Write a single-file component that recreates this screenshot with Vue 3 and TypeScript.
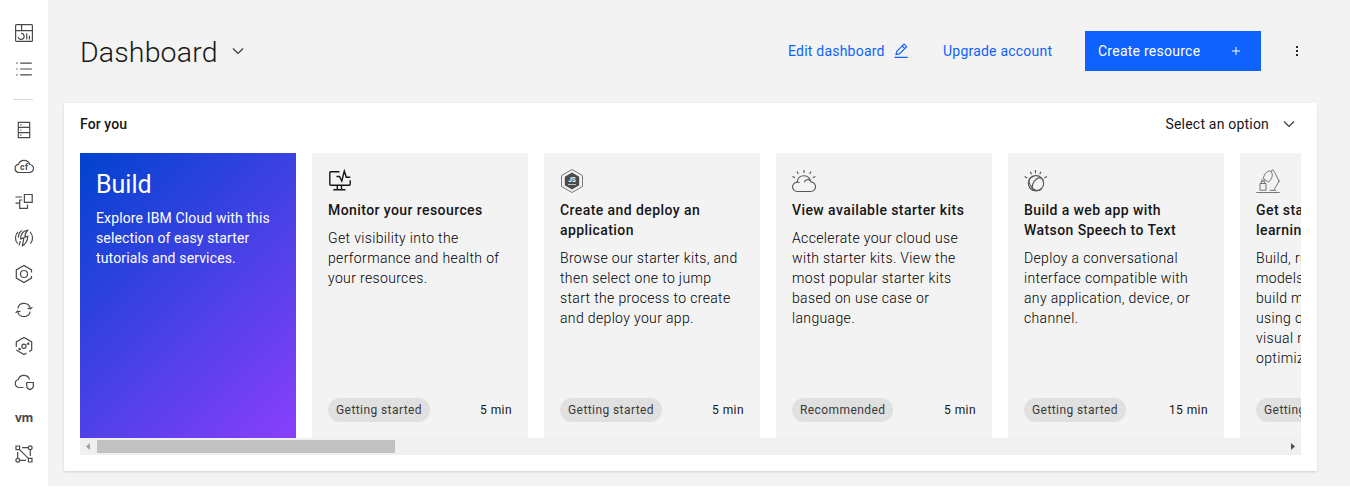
<script setup lang="ts">
interface Card {
  icon: string
  title: string
  body: string
  tag: string
  time: string
}

const cards: Card[] = [
  {
    icon: 'monitor',
    title: 'Monitor your resources',
    body: 'Get visibility into the\nperformance and health of\nyour resources.',
    tag: 'Getting started',
    time: '5 min',
  },
  {
    icon: 'node',
    title: 'Create and deploy an\napplication',
    body: 'Browse our starter kits, and\nthen select one to jump\nstart the process to create\nand deploy your app.',
    tag: 'Getting started',
    time: '5 min',
  },
  {
    icon: 'cloud',
    title: 'View available starter kits',
    body: 'Accelerate your cloud use\nwith starter kits. View the\nmost popular starter kits\nbased on use case or\nlanguage.',
    tag: 'Recommended',
    time: '5 min',
  },
  {
    icon: 'watson',
    title: 'Build a web app with\nWatson Speech to Text',
    body: 'Deploy a conversational\ninterface compatible with\nany application, device, or\nchannel.',
    tag: 'Getting started',
    time: '15 min',
  },
  {
    icon: 'lamp',
    title: 'Get started\nlearning',
    body: 'Build, run\nmodels\nbuild more\nusing open\nvisual mode\noptimize',
    tag: 'Getting started',
    time: '',
  },
]
</script>

<template>
  <div class="shell">
    <nav class="rail">
      <svg viewBox="0 0 20 20"><rect x="1.6" y="1.6" width="16.8" height="16.8" rx="1" /><path d="M1.6 7.600h16.800M7.600 1.600v6M7.200 10.400a3 3 0 1 1-3 3.600M12.700 10.200v6.300M15.400 12.800v3.700" /></svg>
      <svg viewBox="0 0 20 20"><path d="M6.200 4.200h11.600M6.200 10h11.600M6.200 15.800h11.600M2.300 4.200h1.300M2.300 10h1.300M2.300 15.800h1.300" /></svg>
      <span class="divider"></span>
      <svg viewBox="0 0 20 20"><path d="M4.300 2.300h11.400v15.400H4.300zM4.300 7.400h11.400M4.300 12.600h11.400M6.300 4.800h1.200M6.300 10h1.200M6.300 15.100h1.200" /></svg>
      <svg viewBox="0 0 20 20"><path d="M4.800 16.500h10.400a4 4 0 0 0 .6-8A6 6 0 0 0 4.400 8.400A4.100 4.100 0 0 0 4.800 16.500Z" /><text x="10.200" y="14" class="cf">cf</text></svg>
      <svg viewBox="0 0 20 20"><path d="M10.400 2.500h7.800v7.800h-7.800zM1.500 5h6.500M1.500 11.200h4.200M8.300 8H5.700v8.300h7.800v-3.800" /></svg>
      <svg viewBox="0 0 20 20"><path d="M13.700 2.300C9.500 2.400 7 5.500 6.500 10.800l3.400-1-1.500 8c3.600-2 5.100-5.400 5.400-9.600l-3 .9c.1-2.700.9-5 2.900-6.800ZM8 2.500C5.600 3.700 4.500 6.300 4.300 9.800M6.300 13l-1.200 4.400M4 3.900a8.500 8.500 0 0 0-.3 11.800M16 3.900a8.500 8.500 0 0 1 .3 11.800" /></svg>
      <svg viewBox="0 0 20 20"><path d="M17.500 8.500V5.900L10 1.500 2.300 5.900v8.200L10 18.500l7.500-4.400v-2" /><circle cx="10" cy="10" r="3.500" /></svg>
      <svg viewBox="0 0 20 20"><path d="M3.800 8.300A6.400 6.400 0 0 1 16.300 8.500M16.200 11.700A6.400 6.400 0 0 1 3.700 11.500M13.600 8.300l2.900.6 1.900-1.800M6.400 11.700l-2.900-.6-1.900 1.800" /></svg>
      <svg viewBox="0 0 20 20"><path d="M2.300 11V5.900L10 1.500l7.700 4.400v8.200l-2.500 1.400M2.300 14.100 10 18.500l2.500-1.400" /><circle cx="10" cy="10.300" r="2.100" /><circle class="solid" cx="14.200" cy="7.700" r="1.250" /><circle class="solid" cx="5.600" cy="12.900" r="1.250" /></svg>
      <svg viewBox="0 0 20 20"><path d="M9.500 15.500H4.900a4.100 4.100 0 0 1-.6-8 5.900 5.900 0 0 1 11.200 0M12.700 10.500h6.600v4.100c0 1.700-1.400 2.400-3.300 3-1.900-.6-3.300-1.300-3.300-3z" /></svg>
      <svg viewBox="0 0 20 20"><text x="10" y="13.700" class="vm">vm</text></svg>
      <svg viewBox="0 0 20 20"><path d="M2 2h3.600v3.600H2zM14.400 14.400H18V18h-3.600zM5.600 5.600l8.800 8.800M8 3.600h6M3.700 8v6M16.300 6v6M6 16.400h6" /><circle cx="16.200" cy="3.800" r="1.900" /><circle cx="3.800" cy="16.200" r="1.900" /></svg>
    </nav>

    <main class="page">
      <header class="top">
        <h1>Dashboard</h1>
        <svg class="chev" viewBox="0 0 12 8"><path d="m1 1.500 5 5 5-5" /></svg>
        <div class="actions">
          <a class="edit">Edit dashboard</a>
          <svg class="pencil" viewBox="0 0 16 16"><path d="M1.500 14.400h13.200M3 11.600l.8-3.300 7.300-7.200 2.600 2.600-7.300 7.200zM9.200 3l2.600 2.600" /></svg>
          <a class="upgrade">Upgrade account</a>
          <button class="create"><span>Create resource</span><svg viewBox="0 0 10 10"><path d="M5 1v8M1 5h8" /></svg></button>
          <svg class="dots" viewBox="0 0 4 12"><path d="M1 1h2v2H1zM1 5h2v2H1zM1 9h2v2H1z" /></svg>
        </div>
      </header>

      <section class="panel">
        <div class="panel-head">
          <h2>For you</h2>
          <span class="select">Select an option</span>
          <svg class="chev" viewBox="0 0 12 8"><path d="m1 1.500 5 5 5-5" /></svg>
        </div>

        <div class="strip">
          <article class="hero">
            <h3>Build</h3>
            <p>Explore IBM Cloud with this<br />selection of easy starter<br />tutorials and services.</p>
          </article>

          <article v-for="card in cards" :key="card.title" class="card">
            <svg v-if="card.icon === 'monitor'" class="glyph dark" viewBox="0 0 24 24"><path d="M11.500 2.800H2.800q-1 0-1 1v11.400q0 1 1 1h18.400q1 0 1-1v-4M8.500 7.500h3l2.300 4.500 2.500-10 2 6.300h4M9.300 16.300v4M13.500 16.300v4M5.300 20.800h12.200" /></svg>
            <svg v-else-if="card.icon === 'node'" class="glyph thin" viewBox="0 0 24 24"><path d="M12 .5 22.500 6.500v11L12 23.500 1.500 17.500v-11z" /><path class="fill" d="m12 3.600 7.200 4.200v8.400l-7.200 4.200-7.200-4.200V7.800z" /><text x="12" y="13.200">JS</text><path class="white" d="M8 15.500h8" /></svg>
            <svg v-else-if="card.icon === 'cloud'" class="glyph" viewBox="0 0 24 24"><path d="M5.300 22.500h13.300a4.800 4.800 0 0 0 .2-9.600c-.6-3.800-3.500-6.200-7-6.200-3.700 0-6.300 2.700-6.600 6.400a4.700 4.700 0 0 0 .1 9.400ZM5.300 13q1.300-.1 2.300.6M12.300 13.200c1-2.500 4-3.400 6-1.700M12 1v3M5 2.500l1.300 2.500M18.900 2.500 17.600 5M.5 7.500l2.600 1.300M23.400 7.500l-2.600 1.300" /></svg>
            <svg v-else-if="card.icon === 'watson'" class="glyph" viewBox="0 0 24 24"><circle cx="12" cy="14.300" r="7.700" /><path d="M9.300 7.500c-4.800.8-5.300 4.500-3.200 8.500 2.400 4.500 7.200 7.500 11.200 4M9.300 20.800c-2.600-2.600 0-8.500 3.200-10.800 3.600-2.600 6.700-.4 6.900 3.300M5 17.700c1.500 2.500 5 4.300 8.200 3.600M11.500 1v3.200M6.300 2.800l1.300 2.500M17 2.800 15.700 5.300M.7 7.400l2.600 1.500M22.900 7.400l-2.600 1.500" /></svg>
            <svg v-else class="glyph thin" viewBox="0 0 24 24"><path d="M.3 23.500h23.400M4 14.500h6v6.700H4zM5.300 14.300v-2h3.400v2M6 12.200V10M8 12.200v-1.500M7.300 9.500c1.200-5.200 3.600-8 8-7.300l1 3.200c.2 2.800-1.200 5.300-3.800 7.700zM15.500 1.500l1.300-.8 1.800 2.600 4.600 8.800-5.300 8.700M22 11.500l1.500.8M13.500 21.300h6.800" /></svg>
            <h4>{{ card.title }}</h4>
            <p>{{ card.body }}</p>
            <footer><span class="tag">{{ card.tag }}</span><span class="time">{{ card.time }}</span></footer>
          </article>
        </div>

        <div class="scrollbar">
          <svg class="arrow left" viewBox="0 0 4 7"><path d="M4 0v7L0 3.500z" /></svg>
          <span class="thumb"></span>
          <svg class="arrow right" viewBox="0 0 4 7"><path d="M0 0v7l4-3.500z" /></svg>
        </div>
      </section>
    </main>
  </div>
</template>

<style>
body {
  background: #fff;
  overflow: hidden;
}
</style>

<style scoped>
* {
  box-sizing: border-box;
}
.shell {
  display: flex;
  width: 1350px;
  height: 486px;
  font-family: Roboto, "Liberation Sans", sans-serif;
  font-size: 14px;
  line-height: 20px;
  color: #161616;
}
h1, h2, h3, h4, p {
  margin: 0;
}
svg {
  display: block;
  flex: none;
  fill: none;
  stroke: #393939;
}
.rail {
  display: flex;
  flex-direction: column;
  align-items: center;
  gap: 16px;
  width: 48px;
  padding-top: 23px;
  background: #fff;
}
.rail svg {
  width: 20px;
  height: 20px;
  stroke: #4a4a4a;
  stroke-width: 1.2;
}
.rail text {
  fill: #4a4a4a;
  stroke: none;
  text-anchor: middle;
}
.rail .solid {
  fill: #4a4a4a;
  stroke: none;
}
.cf {
  font-size: 8.5px;
  font-weight: 700;
  letter-spacing: 0.4px;
}
.vm {
  font-family: "Open Sans", sans-serif;
  font-size: 12px;
  font-weight: 700;
  letter-spacing: -0.3px;
}
.divider {
  width: 20px;
  height: 1px;
  margin: 4px 0 4px -2px;
  background: #d8d8d8;
}
.page {
  flex: 1;
  background: #f3f3f3;
}
.top {
  display: flex;
  align-items: center;
  height: 103px;
  padding: 0 51px 1px 32px;
}
h1 {
  width: 137px;
  padding-top: 3px;
  font-size: 28.5px;
  line-height: 36px;
  font-weight: 300;
  letter-spacing: 0.15px;
}
.chev {
  width: 12px;
  height: 8px;
  stroke-width: 1.2;
}
.top > .chev {
  margin-left: 15px;
}
.actions {
  display: flex;
  align-items: center;
  margin-left: auto;
}
.actions a {
  color: #0f62fe;
  letter-spacing: 0.22px;
}
.edit {
  width: 105px;
}
.pencil {
  width: 16px;
  height: 16px;
  stroke: #0f62fe;
  stroke-width: 1.1;
}
.upgrade {
  width: 142px;
  margin-left: 34px;
}
.create {
  display: flex;
  align-items: center;
  justify-content: space-between;
  width: 176px;
  height: 40px;
  padding: 0 20px 0 13px;
  border: 0;
  background: #0f62fe;
  color: #fff;
  font: inherit;
  letter-spacing: 0.25px;
}
.create svg {
  width: 10px;
  height: 10px;
  stroke: #fff;
  stroke-width: 1;
}
.dots {
  width: 4px;
  height: 12px;
  margin-left: 34px;
  fill: #262626;
  stroke: none;
}
.panel {
  width: 1253px;
  height: 368px;
  margin-left: 16px;
  padding: 0 16px;
  background: #fff;
  box-shadow: 0 1px 2px rgba(0, 0, 0, 0.14);
}
.panel-head {
  display: flex;
  align-items: center;
  height: 50px;
  padding: 0 6px 8px 0;
}
h2 {
  font-size: 14px;
  font-weight: 500;
  letter-spacing: 0.1px;
}
.select {
  margin-left: auto;
  letter-spacing: 0.2px;
}
.panel-head .chev {
  margin-left: 14px;
}
.strip {
  display: flex;
  gap: 16px;
  height: 285px;
  overflow: hidden;
}
.strip article {
  display: flex;
  flex: none;
  flex-direction: column;
  width: 216px;
  padding: 16px;
  white-space: pre;
}
.hero {
  background: linear-gradient(135deg, #0043ce, #8a3ffc);
  color: #fff;
}
.hero h3 {
  font-size: 25px;
  line-height: 32px;
  font-weight: 400;
}
.hero p {
  margin-top: 7px;
  letter-spacing: 0.14px;
}
.card {
  background: #f3f3f3;
}
.glyph {
  width: 24px;
  height: 24px;
  margin-bottom: 7px;
  stroke: #565656;
  stroke-width: 1.1;
}
.glyph.dark {
  stroke: #161616;
  stroke-width: 1.4;
}
.glyph.thin {
  stroke-width: 0.8;
}
.glyph .fill {
  fill: #4c4c4c;
  stroke: none;
}
.glyph text {
  fill: #fff;
  stroke: none;
  font-size: 6.5px;
  font-weight: 700;
  letter-spacing: 0;
  text-anchor: middle;
}
.glyph .white {
  stroke: #ddd;
}
h4 {
  font-size: 14px;
  font-weight: 500;
  letter-spacing: 0.42px;
}
.card p {
  margin-top: 8px;
  color: #000;
  font-weight: 300;
  letter-spacing: 0.35px;
}
.card footer {
  display: flex;
  align-items: center;
  justify-content: space-between;
  height: 24px;
  margin-top: auto;
  font-size: 12px;
  letter-spacing: 0.42px;
}
.tag {
  height: 24px;
  padding: 0 8px;
  border-radius: 12px;
  background: #e0e0e0;
  color: #393939;
  line-height: 24px;
}
.scrollbar {
  display: flex;
  align-items: center;
  height: 17px;
  padding: 0 6px;
  background: #f0f0f0;
}
.arrow {
  width: 4px;
  height: 7px;
  fill: #505050;
  stroke: none;
}
.arrow.left {
  fill: #a3a3a3;
}
.arrow.right {
  margin-left: auto;
}
.thumb {
  width: 298px;
  height: 13px;
  margin-left: 7px;
  background: #c1c1c1;
}
</style>
